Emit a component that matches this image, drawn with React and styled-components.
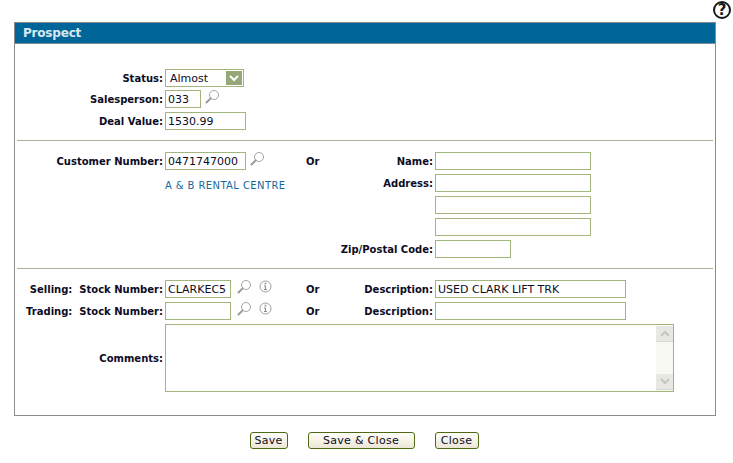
import styled, { createGlobalStyle } from 'styled-components';

const GlobalStyle = createGlobalStyle`
  html, body {
    margin: 0;
    padding: 0;
    background: #fff;
  }
  body {
    font-family: "DejaVu Sans", Verdana, sans-serif;
    font-size: 11px;
    color: #0c0c24;
  }
`;

const Page = styled.div`
  width: 733px;
  height: 463px;
  overflow: hidden;
  box-sizing: border-box;
  padding: 1px 2px 0 14px;
`;

const HelpBar = styled.div`
  height: 21px;
  display: flex;
  justify-content: flex-end;
`;

const HelpButton = styled.span`
  width: 18px;
  height: 18px;
  box-sizing: border-box;
  border: 2px solid #1a1a1a;
  border-radius: 50%;
  display: flex;
  align-items: center;
  justify-content: center;
  font-size: 15px;
  font-weight: bold;
  color: #1a1a1a;
`;

const Panel = styled.div`
  width: 702px;
  height: 394px;
  box-sizing: border-box;
  border: 1px solid #8c8c8c;
`;

const PanelTitle = styled.div`
  height: 21px;
  box-sizing: border-box;
  background: #006699;
  border-bottom: 1px solid #7f8c96;
  padding-left: 8px;
  color: #d9e8f0;
  font-size: 12px;
  font-weight: bold;
  letter-spacing: -0.2px;
  line-height: 21px;
`;

const Section = styled.div`
  display: grid;
  grid-template-columns: 150px 141px 30px 99px 1fr;
  grid-template-rows: ${({ $rows }) => $rows || 'none'};
  grid-auto-rows: 18px;
  row-gap: 4px;
  padding: ${({ $top }) => $top}px 0 ${({ $bottom }) => $bottom}px;
`;

const Divider = styled.div`
  height: 1px;
  margin: 0 2px;
  background: #aeb094;
`;

const Label = styled.label`
  grid-column: ${({ $col }) => $col || 1};
  display: flex;
  align-items: center;
  justify-content: flex-end;
  padding-right: 2px;
  padding-top: ${({ $nudge }) => $nudge || 0}px;
  font-size: 10px;
  font-weight: bold;
  white-space: pre;
`;

const Or = styled.span`
  grid-column: 3;
  display: flex;
  align-items: center;
  font-size: 10px;
  font-weight: bold;
`;

const Field = styled.div`
  grid-column: ${({ $col }) => $col || 2} / span ${({ $span }) => $span || 1};
  display: flex;
  align-items: flex-start;
`;

const Input = styled.input`
  width: ${({ $w }) => $w}px;
  height: 18px;
  flex-shrink: 0;
  box-sizing: border-box;
  border: 1px solid #a2b57c;
  padding: 0 2px;
  outline: none;
  background: #fff;
  font: inherit;
  color: inherit;
`;

const Select = styled.div`
  width: 79px;
  height: 18px;
  flex-shrink: 0;
  box-sizing: border-box;
  border: 1px solid #a2b57c;
  padding: 0 1px 0 4px;
  display: flex;
  align-items: center;
  justify-content: space-between;
`;

const SelectArrow = styled.span`
  width: 16px;
  height: 14px;
  background: #96a878;
  display: flex;
  align-items: center;
  justify-content: center;
`;

const IconSlot = styled.span`
  display: flex;
  margin-left: ${({ $gap }) => $gap}px;
`;

const CustomerName = styled.a`
  grid-column: 2;
  display: flex;
  align-items: center;
  padding-top: 4px;
  color: #17699c;
  font-size: 10px;
  letter-spacing: 0.4px;
`;

const CommentBox = styled.div`
  width: 509px;
  height: 68px;
  box-sizing: border-box;
  border: 1px solid #a2b57c;
  display: flex;
`;

const CommentInput = styled.textarea`
  flex: 1;
  border: none;
  outline: none;
  resize: none;
  padding: 2px;
  font: inherit;
`;

const ScrollTrack = styled.div`
  width: 17px;
  display: flex;
  flex-direction: column;
  justify-content: space-between;
  padding: 1px 0;
  background: #f9f9f4;
`;

const ScrollButton = styled.span`
  height: 15px;
  background: #e8e8e2;
  border-bottom: 1px solid #d8d8d0;
  display: flex;
  align-items: center;
  justify-content: center;
`;

const ButtonBar = styled.div`
  width: 700px;
  margin-top: 16px;
  display: flex;
  justify-content: center;
  gap: 20px;
`;

const Button = styled.button`
  width: ${({ $w }) => $w}px;
  height: 17px;
  box-sizing: border-box;
  padding: 0;
  border: 1px solid #4d6a12;
  border-radius: 3px;
  background: linear-gradient(#fffefa, #ece6d6);
  font: inherit;
  color: inherit;
  letter-spacing: 0.3px;
`;

const Magnifier = () => (
  <svg width="16" height="14" viewBox="0 0 16 14" fill="none">
    <circle cx="10" cy="5" r="4.5" stroke="#a4a4a4" fill="#fff" />
    <path d="M6.6 8.4 L2.5 12.5" stroke="#9a9a9a" strokeWidth="2" strokeLinecap="round" />
  </svg>
);

const InfoIcon = () => (
  <svg width="13" height="13" viewBox="0 0 13 13" fill="none">
    <circle cx="6.5" cy="6.5" r="5.5" stroke="#9c9c9c" />
    <rect x="5.7" y="2.8" width="1.6" height="1.6" fill="#8e8e8e" />
    <path d="M5 5.6h2v3.4h1v.9H5v-.9h.9V6.5H5z" fill="#8e8e8e" />
  </svg>
);

const Chevron = ({ color, up }) => (
  <svg width="10" height="7" viewBox="0 0 10 7" fill="none">
    <path d={up ? 'M1 6 L5 2 L9 6' : 'M1 1 L5 5 L9 1'} stroke={color} strokeWidth="2" />
  </svg>
);

const App = () => {
  return (
    <Page>
      <GlobalStyle />
      <HelpBar>
        <HelpButton>?</HelpButton>
      </HelpBar>
      <Panel>
        <PanelTitle>Prospect</PanelTitle>

        <Section $top={25} $bottom={10} $rows="17px 18px 18px">
          <Label $nudge={1}>Status:</Label>
          <Field>
            <Select>
              Almost
              <SelectArrow>
                <Chevron color="#fff" />
              </SelectArrow>
            </Select>
          </Field>
          <Label>Salesperson:</Label>
          <Field>
            <Input $w={36} defaultValue="033" />
            <IconSlot $gap={3}><Magnifier /></IconSlot>
          </Field>
          <Label>Deal Value:</Label>
          <Field>
            <Input $w={81} defaultValue="1530.99" />
          </Field>
        </Section>

        <Divider />

        <Section $top={11} $bottom={10}>
          <Label>Customer Number:</Label>
          <Field>
            <Input $w={81} defaultValue="0471747000" />
            <IconSlot $gap={3}><Magnifier /></IconSlot>
          </Field>
          <Or>Or</Or>
          <Label $col={4}>Name:</Label>
          <Field $col={5}><Input $w={156} /></Field>

          <CustomerName>A &amp; B RENTAL CENTRE</CustomerName>
          <Label $col={4}>Address:</Label>
          <Field $col={5}><Input $w={156} /></Field>

          <Field $col={5}><Input $w={156} /></Field>
          <Field $col={5}><Input $w={156} /></Field>

          <Label $col={4}>Zip/Postal Code:</Label>
          <Field $col={5}><Input $w={76} /></Field>
        </Section>

        <Divider />

        <Section $top={11} $bottom={0} $rows="18px 18px 68px">
          <Label>{'Selling:  Stock Number:'}</Label>
          <Field>
            <Input $w={66} defaultValue="CLARKEC5" />
            <IconSlot $gap={5}><Magnifier /></IconSlot>
            <IconSlot $gap={7}><InfoIcon /></IconSlot>
          </Field>
          <Or>Or</Or>
          <Label $col={4}>Description:</Label>
          <Field $col={5}><Input $w={191} defaultValue="USED CLARK LIFT TRK" /></Field>

          <Label>{'Trading:  Stock Number:'}</Label>
          <Field>
            <Input $w={66} />
            <IconSlot $gap={5}><Magnifier /></IconSlot>
            <IconSlot $gap={7}><InfoIcon /></IconSlot>
          </Field>
          <Or>Or</Or>
          <Label $col={4}>Description:</Label>
          <Field $col={5}><Input $w={191} /></Field>

          <Label>Comments:</Label>
          <Field $span={4}>
            <CommentBox>
              <CommentInput />
              <ScrollTrack>
                <ScrollButton><Chevron up color="#c6c6c0" /></ScrollButton>
                <ScrollButton><Chevron color="#c6c6c0" /></ScrollButton>
              </ScrollTrack>
            </CommentBox>
          </Field>
        </Section>
      </Panel>

      <ButtonBar>
        <Button $w={38}>Save</Button>
        <Button $w={107}>Save &amp; Close</Button>
        <Button $w={44}>Close</Button>
      </ButtonBar>
    </Page>
  );
};

export default App;
